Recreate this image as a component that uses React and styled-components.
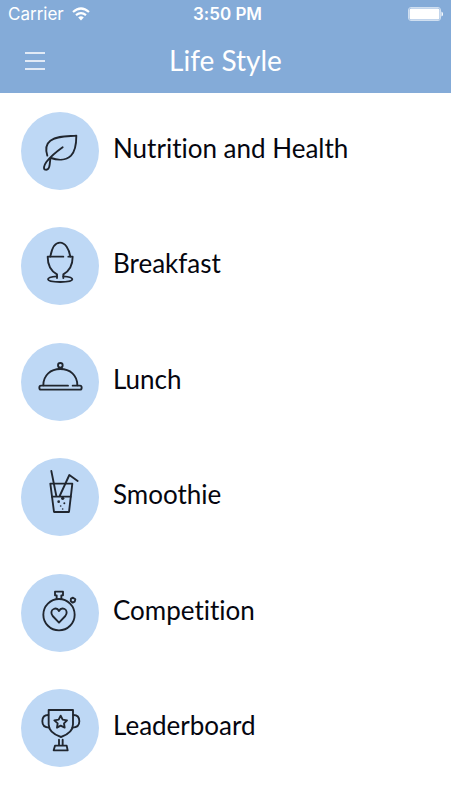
import React from "react";
import styled, { createGlobalStyle } from "styled-components";

const GlobalStyle = createGlobalStyle`
  * { box-sizing: border-box; }
  body {
    margin: 0;
    background: #fff;
    font-family: Lato, "Open Sans", sans-serif;
    font-variant-ligatures: none;
  }
`;

const Screen = styled.div`
  min-height: 100vh;
  display: flex;
  flex-direction: column;
  background: #fff;
`;

const Header = styled.header`
  background: #84abd8;
  color: #fff;
`;

const StatusBar = styled.div`
  display: grid;
  grid-template-columns: 1fr auto 1fr;
  align-items: center;
  height: 28px;
  padding: 0 8px;
  font-family: Inter, sans-serif;
  font-size: 17px;
  line-height: 28px;
`;

const Carrier = styled.div`
  display: flex;
  align-items: center;
  gap: 8px;
`;

const Clock = styled.time`
  padding-left: 4px;
  font-weight: 600;
`;

const Battery = styled.svg`
  justify-self: end;
`;

const NavBar = styled.div`
  display: grid;
  grid-template-columns: 48px 1fr 48px;
  align-items: center;
  height: 65px;
  padding: 0 11px;
`;

const MenuButton = styled.button`
  display: grid;
  place-items: center;
  width: 48px;
  height: 48px;
  padding: 0;
  border: 0;
  background: none;
  color: inherit;
  cursor: pointer;
`;

const Title = styled.h1`
  margin: 0;
  padding-bottom: 2px;
  text-align: center;
  font-size: 28px;
  line-height: 36px;
  font-weight: 400;
`;

const List = styled.ul`
  flex: 1;
  display: flex;
  flex-direction: column;
  justify-content: space-between;
  margin: 0;
  padding: 19px 21px 33px;
  list-style: none;
`;

const RowLink = styled.a`
  display: flex;
  align-items: center;
  gap: 14px;
  color: #05060f;
  text-decoration: none;
`;

const Disc = styled.span`
  flex: none;
  width: 78px;
  height: 78px;
  border-radius: 50%;
  background: #bed8f5;
`;

const Glyph = styled.svg`
  display: block;
  width: 100%;
  height: 100%;
  fill: none;
  stroke: #20262f;
  stroke-width: 5.6;
  stroke-linecap: round;
  stroke-linejoin: round;
`;

const Label = styled.span`
  padding-bottom: 6px;
  font-size: 26px;
  line-height: 32px;
`;

const items = [
  {
    label: "Nutrition and Health",
    icon: (
      <>
        <path d="M97 151C91 132 93 116 106 106C126 91 155 93 184 91C184 113 181 137 168 151C152 166 127 165 108 158" />
        <path d="M143 126C126 138 107 154 94 170C87 180 84 192 91 193C99 195 103 188 104 178L106 161" />
      </>
    ),
  },
  {
    label: "Breakfast",
    icon: (
      <>
        <path d="M106 109C110 86 120 67 135 67C151 67 162 86 166 109" />
        <path d="M145 109H98C98 134 106 151 126 162V173M160 109H173C173 134 164 151 145 162V173" />
        <path d="M126 168C109 169 99 172 99 177C99 182 115 185 136 185C157 185 172 182 172 177C172 172 162 169 145 168" />
      </>
    ),
  },
  {
    label: "Lunch",
    icon: (
      <>
        <circle cx="136" cy="87" r="7" />
        <path d="M132 96H140" strokeWidth="7" />
        <path d="M85 147C85 117 107 98 136 98C165 98 187 117 187 147" />
        <path d="M159 148H78Q73 148 73 154Q73 160 78 160H195Q200 160 200 154Q200 148 195 148H173" />
      </>
    ),
  },
  {
    label: "Smoothie",
    icon: (
      <>
        <path d="M106 97H172L162 182H117Z" />
        <path d="M109 59L124 134M134 134L163 71L188 89M111 136H167" />
        <g fill="#20262f" stroke="none">
          <circle cx="143" cy="141" r="5" />
          <circle cx="131" cy="151" r="4" />
          <circle cx="148" cy="156" r="3" />
          <circle cx="137" cy="164" r="2.5" />
          <circle cx="143" cy="173" r="2.5" />
        </g>
      </>
    ),
  },
  {
    label: "Competition",
    icon: (
      <>
        <circle cx="132" cy="142" r="47" />
        <path d="M125 95V84H120V73H144V84H139V95" />
        <path d="M168 94L174 91L181 96L179 103L173 106L167 101Z" />
        <path d="M132 166L113 146C107 139 108 128 116 125C123 122 129 125 132 131C135 125 142 122 149 125C156 128 157 139 151 146Z" />
      </>
    ),
  },
  {
    label: "Leaderboard",
    icon: (
      <>
        <path d="M101 83H174V126C174 147 159 157 138 164C116 157 101 147 101 126Z" />
        <path d="M100 98C88 98 82 106 82 117C82 129 90 136 103 136M175 98C187 98 193 106 193 117C193 129 185 136 172 136" />
        <path d="M137 100L143 112L156 114L147 123L149 136L137 130L126 136L128 123L118 114L131 112Z" />
        <path d="M132 172V189M143 172V189M120 190H155L158 204H116Z" />
      </>
    ),
  },
];

function MenuItem({ label, icon }) {
  return (
    <li>
      <RowLink href="#">
        <Disc>
          <Glyph viewBox="18 20 234 234" aria-hidden="true">{icon}</Glyph>
        </Disc>
        <Label>{label}</Label>
      </RowLink>
    </li>
  );
}

export default function App() {
  return (
    <Screen>
      <GlobalStyle />
      <Header>
        <StatusBar>
          <Carrier>
            <span>Carrier</span>
            <svg width="18" height="14" viewBox="0 0 18 14" fill="none" stroke="#fff" strokeWidth="2.2" aria-hidden="true">
              <path d="M1 5Q9 -2 17 5M4 8.2Q9 4 14 8.2" />
              <path d="M6.2 10.4Q9 8.2 11.8 10.4L9 13.4Z" fill="#fff" stroke="none" />
            </svg>
          </Carrier>
          <Clock>3:50 PM</Clock>
          <Battery width="35" height="14" viewBox="0 0 35 14" aria-hidden="true">
            <rect x="0.5" y="0.5" width="32" height="13" rx="2.5" fill="#84abd8" stroke="#d0dff0" />
            <rect x="1.5" y="1.5" width="30" height="11" rx="1.5" fill="#fff" />
            <path d="M33.5 4.5Q35 5 35 7Q35 9 33.5 9.5Z" fill="#fff" />
          </Battery>
        </StatusBar>
        <NavBar>
          <MenuButton type="button" aria-label="Menu">
            <svg width="20" height="18" viewBox="0 0 20 18" stroke="#fff" strokeWidth="1.3" aria-hidden="true">
              <path d="M0 1H20M0 9H20M0 17H20" />
            </svg>
          </MenuButton>
          <Title>Life Style</Title>
        </NavBar>
      </Header>
      <List>
        {items.map((item) => (
          <MenuItem key={item.label} {...item} />
        ))}
      </List>
    </Screen>
  );
}
